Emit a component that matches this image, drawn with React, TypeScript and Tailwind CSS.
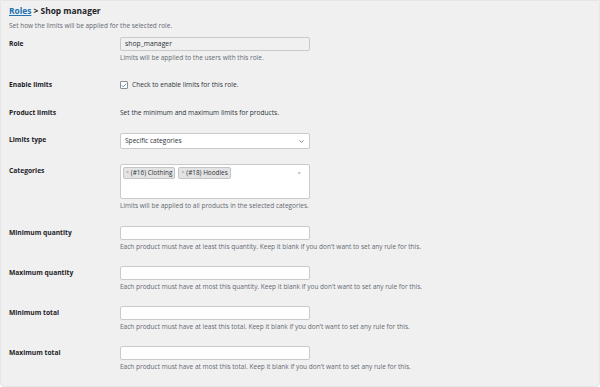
import { Check, ChevronDown } from "lucide-react";

const font = { fontFamily: '"Open Sans", "Noto Sans", sans-serif' };

function Label({ children }: { children: React.ReactNode }) {
  return (
    <div className="w-[111px] shrink-0 text-[6.7px] font-bold leading-[14px] text-[#1d2327]">
      {children}
    </div>
  );
}

function Desc({ children }: { children: React.ReactNode }) {
  return <p className="mt-[2px] text-[6.5px] leading-[10px] text-[#646970]">{children}</p>;
}

function TextInput({ value, muted }: { value?: string; muted?: boolean }) {
  return (
    <div
      className={`h-[14px] w-[190px] rounded-[2px] border border-[#c9cacc] px-[4px] text-[6.8px] leading-[12px] text-[#2c3338] ${
        muted ? "bg-[#f0f0f1]" : "bg-white"
      }`}
    >
      {value}
    </div>
  );
}

function Tag({ text }: { text: string }) {
  return (
    <span className="flex h-[12px] items-center gap-[2px] rounded-[2px] border border-[#c3c4c7] bg-[#e4e4e5] px-[2px] text-[6.4px] text-[#2c3338]">
      <span className="text-[5px] text-[#8c8f94]">×</span>
      {text}
    </span>
  );
}

const limitRows = [
  { label: "Minimum quantity", desc: "Each product must have at least this quantity. Keep it blank if you don't want to set any rule for this." },
  { label: "Maximum quantity", desc: "Each product must have at most this quantity. Keep it blank if you don't want to set any rule for this." },
  { label: "Minimum total", desc: "Each product must have at least this total. Keep it blank if you don't want to set any rule for this." },
  { label: "Maximum total", desc: "Each product must have at most this total. Keep it blank if you don't want to set any rule for this." },
];

export default function App() {
  return (
    <div className="h-[387px] w-[600px] overflow-hidden bg-white" style={font}>
      <div className="h-full rounded-b-[4px] border border-[#e6e6e7] bg-[#f0f0f1] px-[8px]">
        <h1 className="mt-[3px] text-[8.4px] font-bold leading-[14px] text-[#1d2327]">
          <span className="text-[#2271b1] underline">Roles</span> &gt; Shop manager
        </h1>
        <p className="mt-[1px] text-[6.5px] leading-[14px] text-[#646970]">
          Set how the limits will be applied for the selected role.
        </p>

        {/* Role */}
        <div className="mt-[4px] flex h-[44px]">
          <Label>Role</Label>
          <div>
            <TextInput value="shop_manager" muted />
            <Desc>Limits will be applied to the users with this role.</Desc>
          </div>
        </div>

        {/* Enable limits */}
        <div className="flex h-[28px]">
          <Label>
            <span className="relative top-[-3px]">Enable limits</span>
          </Label>
          <div className="flex h-[8px] items-center gap-[4px]">
            <span className="flex h-[8px] w-[8px] items-center justify-center rounded-[1px] border border-[#8c8f94] bg-white">
              <Check className="h-[7px] w-[7px] text-[#2271b1]" strokeWidth={3} />
            </span>
            <span className="text-[6.6px] text-[#2c3338]">Check to enable limits for this role.</span>
          </div>
        </div>

        {/* Product limits */}
        <div className="flex h-[24px]">
          <Label>
            <span className="relative top-[-3px]">Product limits</span>
          </Label>
          <span className="relative top-[-3px] text-[6.6px] leading-[14px] text-[#2c3338]">
            Set the minimum and maximum limits for products.
          </span>
        </div>

        {/* Limits type */}
        <div className="flex h-[31px]">
          <Label>Limits type</Label>
          <div className="flex h-[16px] w-[190px] items-center justify-between rounded-[2px] border border-[#c9cacc] bg-white px-[4px] text-[6.6px] text-[#2c3338]">
            Specific categories
            <ChevronDown className="h-[7px] w-[7px] text-[#50575e]" strokeWidth={2.5} />
          </div>
        </div>

        {/* Categories */}
        <div className="flex h-[62px]">
          <Label>Categories</Label>
          <div>
            <div className="flex h-[35px] w-[190px] items-start justify-between rounded-[2px] border border-[#c9cacc] bg-white p-[2px]">
              <div className="flex gap-[3px]">
                <Tag text="(#16) Clothing" />
                <Tag text="(#18) Hoodies" />
              </div>
              <span className="mr-[6px] mt-[2px] text-[6px] leading-[8px] text-[#8c8f94]">×</span>
            </div>
            <Desc>Limits will be applied to all products in the selected categories.</Desc>
          </div>
        </div>

        {limitRows.map((row) => (
          <div key={row.label} className="flex h-[40px]">
            <Label>{row.label}</Label>
            <div>
              <TextInput />
              <Desc>{row.desc}</Desc>
            </div>
          </div>
        ))}
      </div>
    </div>
  );
}
